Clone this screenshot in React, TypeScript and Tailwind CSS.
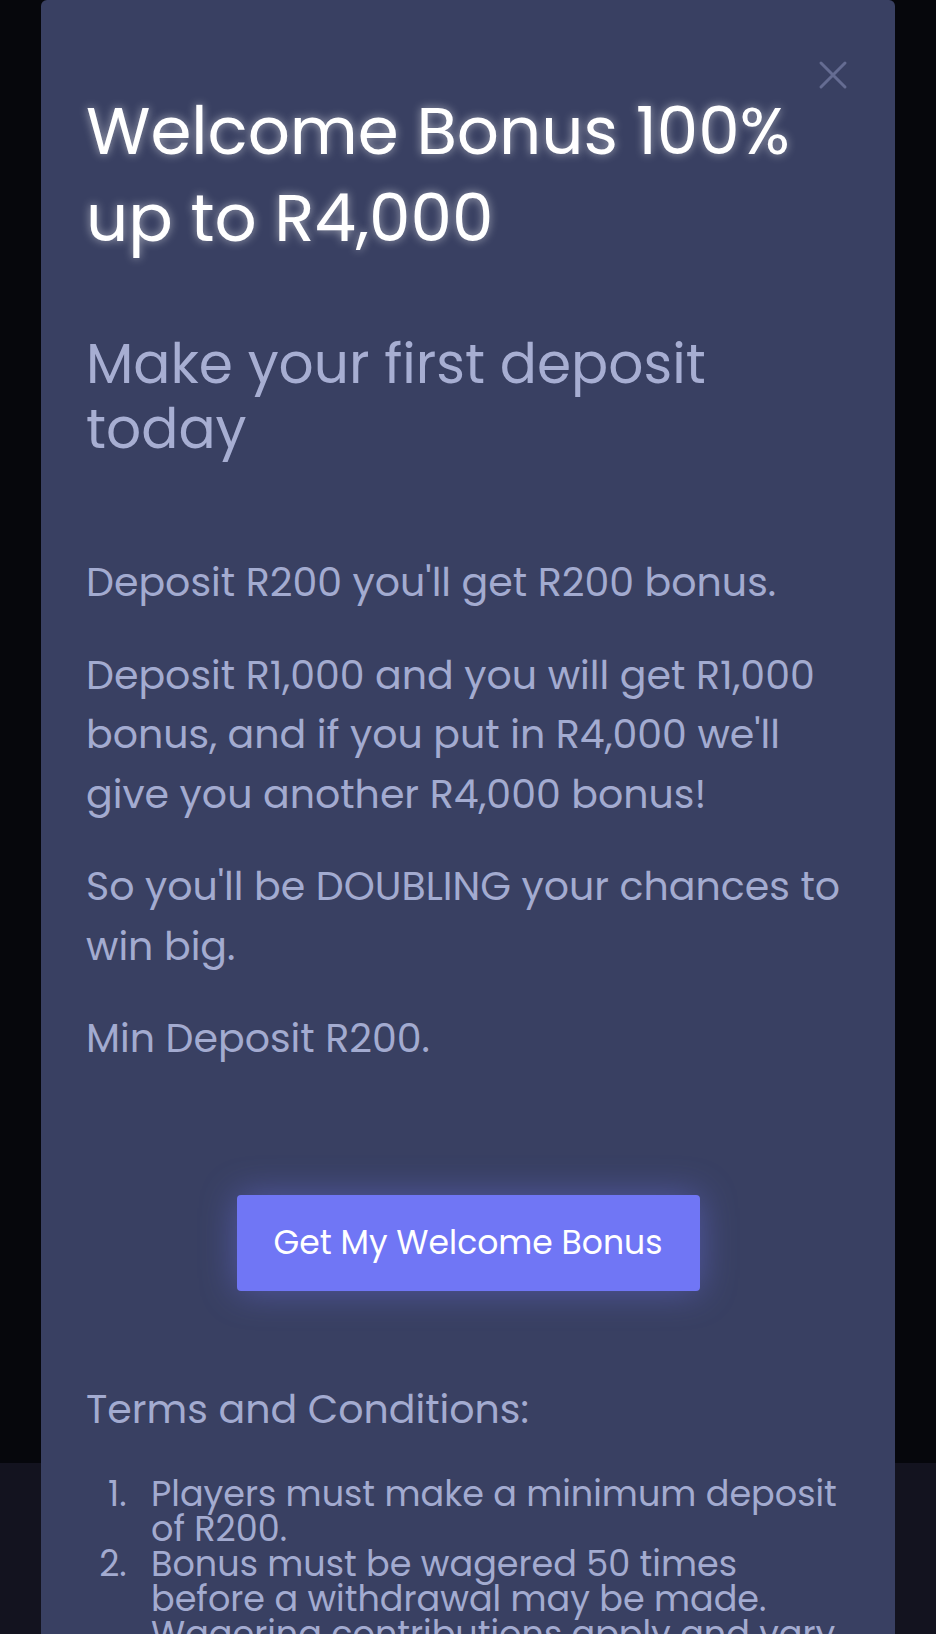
import React from 'react';

const font = { fontFamily: '"Poppins", "Open Sans", "Noto Sans", sans-serif' };

const CloseIcon: React.FC = () => (
  <svg width="32" height="32" viewBox="0 0 32 32" fill="none">
    <path d="M4 4L28 28M28 4L4 28" stroke="#656c92" strokeWidth="3" strokeLinecap="round" />
  </svg>
);

const paragraphs: string[][] = [
  ["Deposit R200 you'll get R200 bonus."],
  ['Deposit R1,000 and you will get R1,000', "bonus, and if you put in R4,000 we'll", 'give you another R4,000 bonus!'],
  ["So you'll be DOUBLING your chances to", 'win big.'],
  ['Min Deposit R200.'],
];

const terms: string[][] = [
  ['Players must make a minimum deposit', 'of R200.'],
  ['Bonus must be wagered 50 times', 'before a withdrawal may be made.', 'Wagering contributions apply and vary'],
];

const App: React.FC = () => {
  return (
    <div className="relative h-[1634px] w-full overflow-hidden bg-[#06070c]" style={font}>
      {/* page behind the modal */}
      <div className="flex h-full flex-col">
        <div className="h-[1463px]" />
        <div className="flex-1 bg-[#13131f]" />
      </div>

      {/* modal */}
      <div className="absolute left-[41px] top-0 h-[1720px] w-[854px] rounded-t-md bg-[#394062] px-[45px] pt-[88px]">
        <button className="absolute right-[46px] top-[59px]">
          <CloseIcon />
        </button>

        <h1 className="text-[66px] font-normal leading-[87px] text-white [text-shadow:0_0_10px_rgba(255,255,255,0.55)]">
          <span className="block whitespace-nowrap">Welcome Bonus 100%</span>
          <span className="block whitespace-nowrap">up to R4,000</span>
        </h1>

        <h2 className="mt-[69px] text-[55px] font-normal leading-[65px] text-[#a7aed2]">
          <span className="block whitespace-nowrap">Make your first deposit</span>
          <span className="block whitespace-nowrap">today</span>
        </h2>

        <div className="mt-[92px] flex flex-col gap-[33px] text-[39.5px] leading-[59.5px] text-[#a3abd0]">
          {paragraphs.map((lines, i) => (
            <p key={i}>
              {lines.map((line, j) => (
                <span key={j} className="block whitespace-nowrap">
                  {line}
                </span>
              ))}
            </p>
          ))}
        </div>

        <div className="mt-[126px] flex justify-center">
          <button className="flex h-[96px] w-[463px] items-center justify-center rounded-[4px] bg-[#7076f5] text-[33px] text-white shadow-[0_0_36px_rgba(112,118,245,0.45)]">
            Get My Welcome Bonus
          </button>
        </div>

        <p className="mt-[89px] text-[39.5px] leading-[59.5px] text-[#a3abd0]">Terms and Conditions:</p>

        <ol className="mt-[37px] list-decimal pl-[50px] text-[35px] leading-[35px] text-[#a3abd0]">
          {terms.map((lines, i) => (
            <li key={i} className="pl-[15px]">
              {lines.map((line, j) => (
                <span key={j} className="block whitespace-nowrap">
                  {line}
                </span>
              ))}
            </li>
          ))}
        </ol>
      </div>
    </div>
  );
};

export default App;
